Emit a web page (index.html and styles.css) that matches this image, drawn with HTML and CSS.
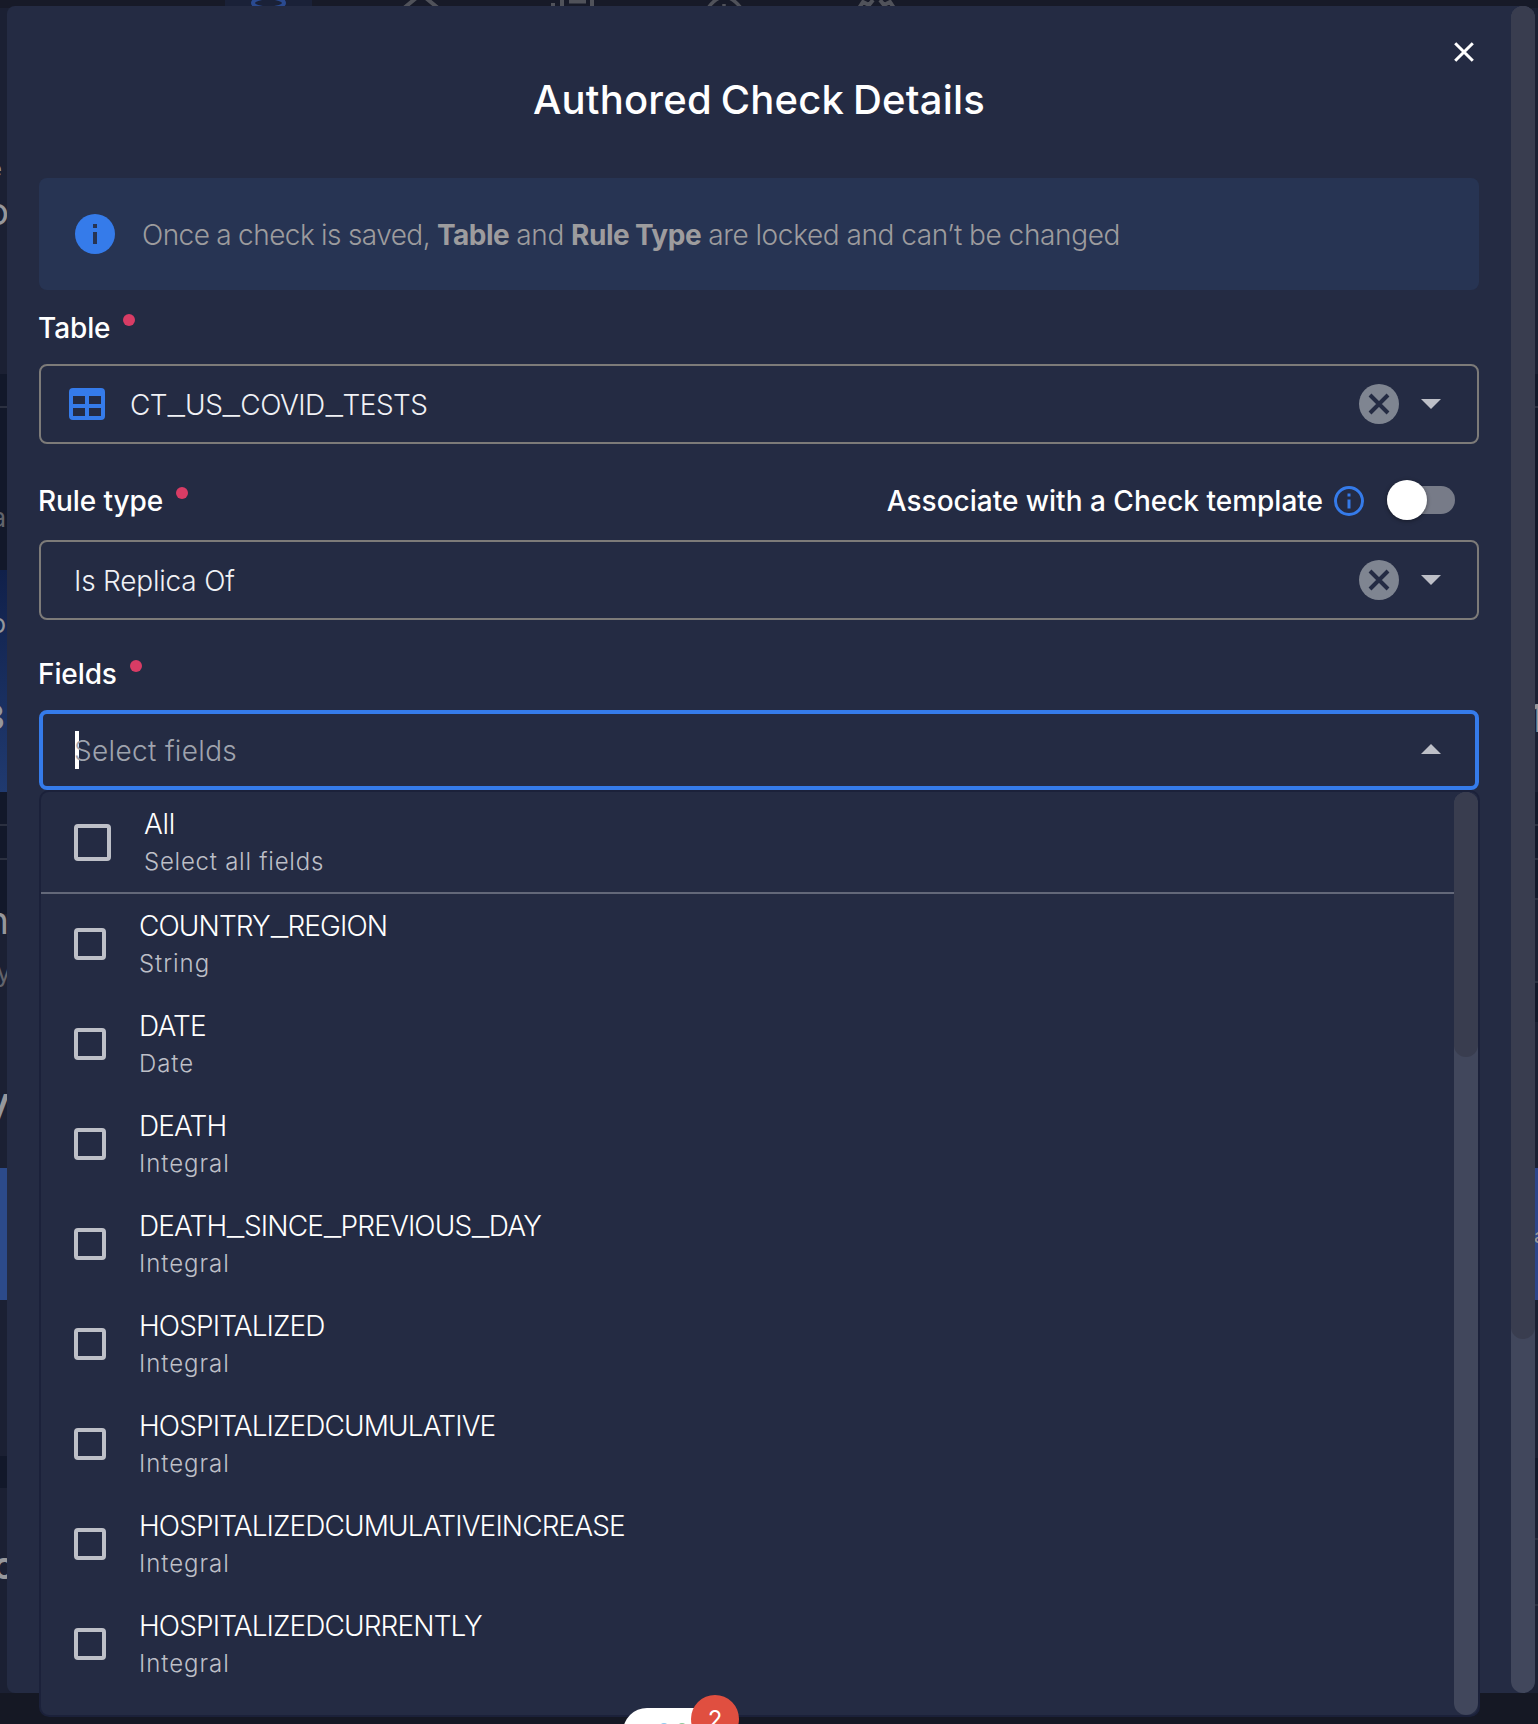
FILE: index.html
```html
<!DOCTYPE html>
<html lang="en">
<head>
<meta charset="utf-8">
<title>Authored Check Details</title>
<link rel="stylesheet" href="styles.css">
</head>
<body>
<svg width="0" height="0" style="display:none">
  <symbol id="clear" viewBox="0 0 40 40"><circle cx="20" cy="20" r="20" fill="#7f8591"/><path d="M11 11l18 18M29 11L11 29" stroke="#242b43" stroke-width="4"/></symbol>
  <symbol id="down" viewBox="0 0 20 10"><path d="M0 0h20L10 10z" fill="#bdbfc7"/></symbol>
  <symbol id="up" viewBox="0 0 20 10"><path d="M0 10h20L10 0z" fill="#bdbfc7"/></symbol>
</svg>
<div class="page">
  <svg class="backdrop" width="1538" height="1724" aria-hidden="true">
    <defs><linearGradient id="card" x1="0" y1="0" x2="0" y2="1"><stop offset="0" stop-color="#10204a"/><stop offset="1" stop-color="#203a70"/></linearGradient></defs>
    <rect width="1538" height="1724" fill="#1b2033"/>
    <rect width="1538" height="8" fill="#171a28"/>
    <rect x="225" width="87" height="8" fill="#1a2138"/>
    <g fill="none" stroke="#50525a" stroke-width="4">
      <ellipse cx="268.500" cy="3" rx="15.500" ry="5.500" stroke="#2a4a90"/>
      <path d="M404 8l17-14 17 14"/>
      <path d="M562 0v8M592 0v8M569 1.500h17M551 5h4"/>
      <path d="M708 8q16-22 33 0M724 4v4" stroke-width="3.500"/>
      <path d="M859 8l4-6 6 3 4-5M880 0l4 5 6-3 4 6"/>
    </g>
    <path d="M0 374h7v196H0zM0 792h7v122H0zM0 1456h7v32H0zM1534 374h4v196h-4zM1534 792h4v108h-4zM1534 982h4v40h-4zM1534 1458h4v32h-4z" fill="#12182a"/>
    <path d="M0 406h7v2H0zM0 824h7v2H0zM0 858h7v2H0zM1534 406h4v2h-4zM1534 824h4v2h-4zM1534 858h4v2h-4zM1534 898h4v2h-4zM1534 981h4v2h-4zM1534 1538h4v2h-4zM1534 1604h4v2h-4z" fill="#2b3040"/>
    <rect y="570" width="7" height="222" fill="url(#card)"/>
    <rect y="1168" width="7" height="132" fill="#2c4a8a"/>
    <rect x="1534" y="1168" width="4" height="132" fill="#2d458b"/>
    <rect y="1693" width="1538" height="31" fill="#151824"/>
    <g class="bgtext" text-anchor="end">
      <text x="2" y="177" font-size="24">e</text><text x="9" y="225" font-size="38">o</text>
      <text x="6" y="527" font-size="26" fill="#62646c">a</text><text x="6" y="633" font-size="26">o</text>
      <text x="5" y="730" font-size="36" font-weight="600">3</text><text x="9" y="934" font-size="38">n</text>
      <text x="11" y="982" font-size="26" fill="#62646c">y</text><text x="10" y="1116" font-size="40" font-weight="600">y</text>
      <text x="15" y="1579" font-size="38" font-weight="600">c</text>
      <text x="1528" y="732" font-size="38" font-weight="600" text-anchor="start">1</text>
      <text x="1534" y="1243" font-size="20" text-anchor="start">a</text>
    </g>
  </svg>

  <main class="dialog">
    <section class="body">
      <header class="head">
        <svg class="close" width="20" height="20" viewBox="0 0 20 20"><path d="M1.2 1.2l17.6 17.6M18.8 1.2L1.2 18.8" stroke="#fff" stroke-width="3"/></svg>
        <h1>Authored Check Details</h1>
      </header>
      <div class="alert">
        <svg width="40" height="40" viewBox="0 0 40 40"><circle cx="20" cy="20" r="20" fill="#357bea"/><path d="M18 10h4v4h-4zM18 18h4v12h-4z" fill="#273453"/></svg>
        <p><span>Once a check is saved, </span><b>Table</b> and <b>Rule Type</b> are locked and can’t be changed</p>
      </div>

      <div class="label first"><span>Table</span><i class="dot"></i></div>
      <div class="select">
        <svg class="tableicon" width="36" height="32" viewBox="0 0 36 32"><path fill-rule="evenodd" fill="#357bea" d="M4 0h28a4 4 0 0 1 4 4v24a4 4 0 0 1-4 4H4a4 4 0 0 1-4-4V4a4 4 0 0 1 4-4zM4 8v8h12V8zM20 8v8h12V8zM4 20v8h12v-8zM20 20v8h12v-8z"/></svg>
        <span class="value table-name">CT<u>_</u>US<u>_</u>COVID<u>_</u>TESTS</span>
        <svg class="clr" width="40" height="40"><use href="#clear"/></svg><svg width="20" height="10"><use href="#down"/></svg>
      </div>

      <div class="label second"><span>Rule type</span><i class="dot"></i>
        <span class="assoc">Associate with a Check template</span>
        <svg class="info" width="30" height="30" viewBox="0 0 30 30"><circle cx="15" cy="15" r="13.5" fill="none" stroke="#357bea" stroke-width="3"/><path d="M13.5 7.5h3v3h-3zM13.5 13.5h3v9h-3z" fill="#357bea"/></svg>
        <span class="toggle"><i></i></span>
      </div>
      <div class="select">
        <span class="value rule-name">Is Replica Of</span>
        <svg class="clr" width="40" height="40"><use href="#clear"/></svg><svg width="20" height="10"><use href="#down"/></svg>
      </div>

      <div class="label third"><span>Fields</span><i class="dot"></i></div>
      <div class="select focus">
        <i class="caret"></i>
        <span class="value placeholder">Select fields</span>
        <svg width="20" height="10"><use href="#up"/></svg>
      </div>

      <div class="menu">
        <ul>
          <li class="all"><i class="box"></i><div><span>All</span><small>Select all fields</small></div></li>
          <li><i class="box"></i><div><span>COUNTRY<u>_</u>REGION</span><small>String</small></div></li>
          <li><i class="box"></i><div><span>DATE</span><small>Date</small></div></li>
          <li><i class="box"></i><div><span>DEATH</span><small>Integral</small></div></li>
          <li><i class="box"></i><div><span>DEATH<u>_</u>SINCE<u>_</u>PREVIOUS<u>_</u>DAY</span><small>Integral</small></div></li>
          <li><i class="box"></i><div><span>HOSPITALIZED</span><small>Integral</small></div></li>
          <li><i class="box"></i><div><span>HOSPITALIZEDCUMULATIVE</span><small>Integral</small></div></li>
          <li><i class="box"></i><div><span>HOSPITALIZEDCUMULATIVEINCREASE</span><small>Integral</small></div></li>
          <li><i class="box"></i><div><span>HOSPITALIZEDCURRENTLY</span><small>Integral</small></div></li>
        </ul>
        <div class="scroll"><i class="thumb"></i></div>
      </div>
    </section>
    <div class="scroll"><i class="thumb long"></i></div>
  </main>

  <div class="widget"><i class="eye blue"></i><i class="eye green"></i><span class="badge">2</span></div>
</div>
</body>
</html>
```
FILE: styles.css
```css
* { box-sizing: border-box; }
body { margin: 0; background: #151824; color: #fff; font-family: Inter, "Liberation Sans", sans-serif; font-size: 28px; }
h1, p, ul { margin: 0; padding: 0; }
svg { display: block; flex: none; }
.page { position: relative; width: 1538px; height: 1724px; padding: 6px 3px 0 7px; overflow: hidden; }
.backdrop { position: absolute; inset: 0; }
.bgtext { fill: #96979b; }
.dialog { position: relative; display: flex; width: 1528px; height: 1687px; background: #242b43; border-radius: 8px 12px 12px 8px; }
.body { width: 1504px; padding: 0 32px; }
.head { display: flex; flex-direction: column; height: 172px; }
.close { align-self: flex-end; margin: 36px 5px 0 0; }
h1 { width: 1440px; margin-top: 14px; text-align: center; font-size: 40px; line-height: 48px; font-weight: 500; white-space: nowrap; letter-spacing: 0.2px; word-spacing: -2px; }
.alert { display: flex; align-items: center; gap: 27px; height: 112px; padding-left: 36px; border-radius: 8px; background: #273453; color: #9d9c9e; white-space: nowrap; }
.alert p { line-height: 36px; font-weight: 300; padding-top: 2px; letter-spacing: -0.36px; word-spacing: -0.4px; }
.alert span { letter-spacing: -0.55px; }
.alert b { font-weight: 700; letter-spacing: -0.5px; }
.label { display: flex; align-items: center; line-height: 36px; font-weight: 500; white-space: nowrap; }
.label > span:first-child { margin-left: -1px; letter-spacing: -0.1px; }
.first { height: 74px; padding-top: 2px; }
.second { height: 96px; padding: 17px 24px 0 0; }
.third { height: 90px; padding: 17px 0 0; }
.label > .dot { align-self: center; width: 12px; height: 12px; margin: 0 0 16px 13px; border-radius: 50%; background: #d83c65; }
.assoc { margin-left: auto; }
.info { margin-left: 11px; }
.toggle { display: flex; align-items: center; width: 68px; height: 28px; margin: 0 0 2px 23px; border-radius: 14px; background: #777b88; }
.toggle i { width: 40px; height: 40px; border-radius: 50%; background: #fff; box-shadow: 0 1px 4px #0006; }
.select { display: flex; align-items: center; height: 80px; padding: 0 36px 0 33px; border: 2px solid #7d7b79; border-radius: 8px; white-space: nowrap; }
.tableicon { margin: 0 25px 0 -5px; }
.value { margin-right: auto; color: #f0f1f5; font-weight: 300; line-height: 36px; padding-top: 2px; }
/* wide underscores in identifiers */
u { display: inline-block; text-decoration: none; transform: scaleX(1.4); margin: 0 3px; }
.table-name { letter-spacing: -0.55px; }
.rule-name { letter-spacing: -0.2px; }
.clr { margin-right: 22px; }
.focus { border: 4px solid #357bea; padding: 0 34px 0 32px; }
.focus svg { margin-bottom: 2px; }
.placeholder { color: #9fa3ae; letter-spacing: 0.33px; margin-left: -1px; }
.caret { width: 4px; height: 38px; margin-right: -4px; background: #fff; }
.menu { position: relative; display: flex; width: 1437px; height: 923px; margin: 2px 0 0 2px; background: #242b43; border-radius: 8px; box-shadow: 0 0 0 2px #1b213a; }
ul { flex: 1; list-style: none; }
li { display: flex; align-items: center; height: 100px; padding-left: 33px; white-space: nowrap; }
li.all { height: 102px; border-bottom: 2px solid #636879; }
.box { width: 32px; height: 32px; margin-right: 33px; border: 4px solid #bdbfc7; border-radius: 4px; }
.all .box { width: 37px; height: 37px; }
li div { display: flex; flex-direction: column; }
li span { font-weight: 300; line-height: 38px; letter-spacing: -0.89px; }
li small { position: relative; top: 1px; color: #bdbfc7; font-weight: 300; font-size: 24px; line-height: 36px; letter-spacing: 0.95px; }
.all span { letter-spacing: -0.3px; }
.all small { letter-spacing: 0.75px; }
.scroll { width: 24px; border-radius: 12px; background: #41475c; }
.thumb { display: block; height: 265px; border-radius: 12px; background: #393d4f; }
.long { height: 1333px; }
.widget { position: absolute; left: 623px; top: 1708px; width: 114px; height: 80px; border-radius: 24px; background: #fff; }
.eye { position: absolute; top: 15px; width: 8px; height: 8px; border-radius: 50%; background: #8fc9ef; }
.blue { left: 37px; }
.green { left: 55px; background: #8fc79a; }
.badge { position: absolute; left: 68px; top: -13px; width: 48px; height: 48px; border-radius: 50%; background: #e04f40; text-align: center; font-size: 24px; line-height: 50px; font-weight: 400; }
```
